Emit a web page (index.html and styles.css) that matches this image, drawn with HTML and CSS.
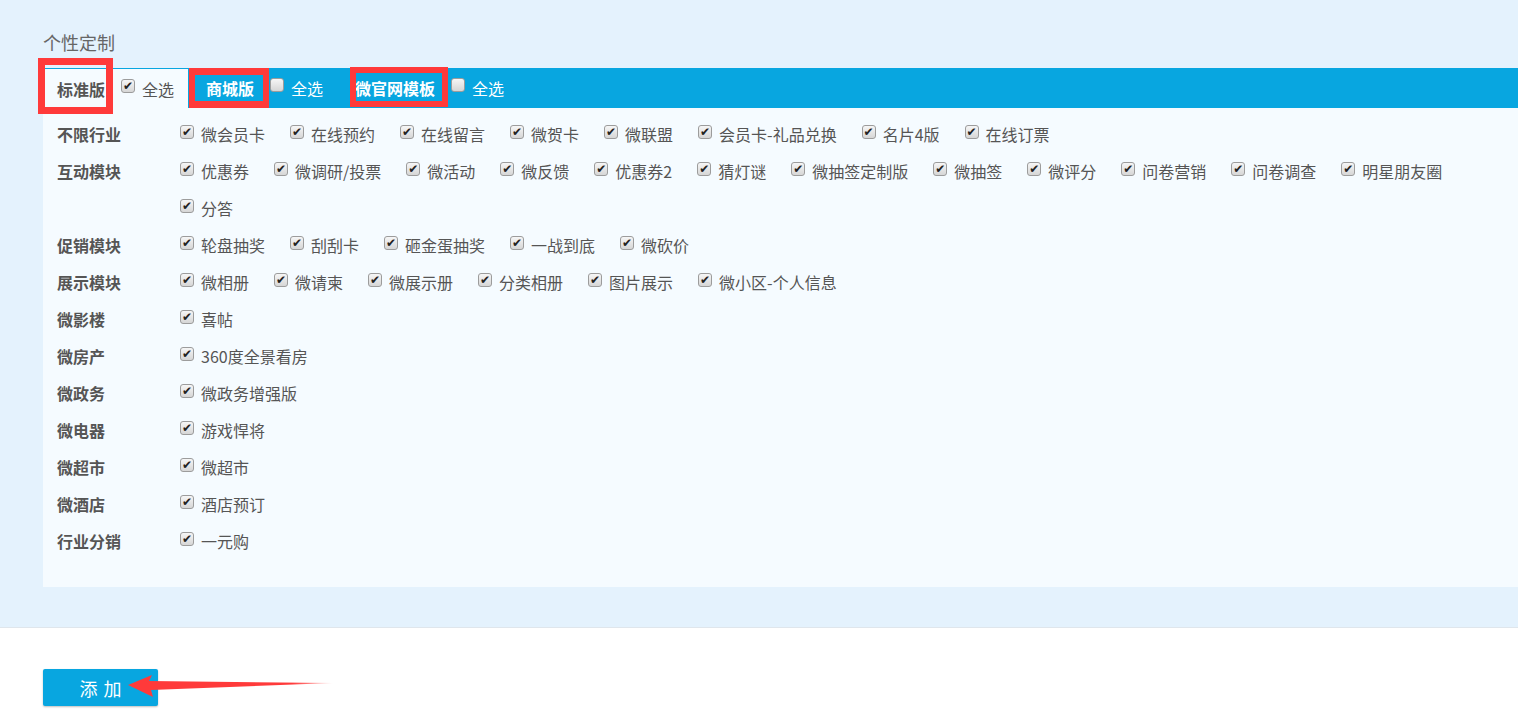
FILE: index.html
```html
<!DOCTYPE html>
<html lang="zh-CN">
<head>
    <meta charset="UTF-8">
    <meta name="viewport" content="width=device-width, initial-scale=1.0">
    <title>个性定制</title>
    <link rel="stylesheet" href="styles.css">
</head>
<body>
    <div class="main">
        <h3 class="title">个性定制</h3>

        <div class="tabs">
            <div class="tab active">
                <span class="tab-name mark mark-a">标准版</span>
                <label class="check-all"><input type="checkbox" checked> 全选</label>
            </div>
            <div class="tab">
                <span class="tab-name mark mark-b">商城版</span>
                <label class="check-all"><input type="checkbox"> 全选</label>
            </div>
            <div class="tab">
                <span class="tab-name mark mark-c">微官网模板</span>
                <label class="check-all"><input type="checkbox"> 全选</label>
            </div>
        </div>

        <div class="panel">
            <div class="row">
                <div class="row-label">不限行业</div>
                <div class="items">
                    <label class="item"><input type="checkbox" checked>微会员卡</label>
                    <label class="item"><input type="checkbox" checked>在线预约</label>
                    <label class="item"><input type="checkbox" checked>在线留言</label>
                    <label class="item"><input type="checkbox" checked>微贺卡</label>
                    <label class="item"><input type="checkbox" checked>微联盟</label>
                    <label class="item"><input type="checkbox" checked>会员卡-礼品兑换</label>
                    <label class="item"><input type="checkbox" checked>名片4版</label>
                    <label class="item"><input type="checkbox" checked>在线订票</label>
                </div>
            </div>
            <div class="row">
                <div class="row-label">互动模块</div>
                <div class="items">
                    <label class="item"><input type="checkbox" checked>优惠券</label>
                    <label class="item"><input type="checkbox" checked>微调研/投票</label>
                    <label class="item"><input type="checkbox" checked>微活动</label>
                    <label class="item"><input type="checkbox" checked>微反馈</label>
                    <label class="item"><input type="checkbox" checked>优惠券2</label>
                    <label class="item"><input type="checkbox" checked>猜灯谜</label>
                    <label class="item"><input type="checkbox" checked>微抽签定制版</label>
                    <label class="item"><input type="checkbox" checked>微抽签</label>
                    <label class="item"><input type="checkbox" checked>微评分</label>
                    <label class="item"><input type="checkbox" checked>问卷营销</label>
                    <label class="item"><input type="checkbox" checked>问卷调查</label>
                    <label class="item"><input type="checkbox" checked>明星朋友圈</label>
                    <label class="item"><input type="checkbox" checked>分答</label>
                </div>
            </div>
            <div class="row">
                <div class="row-label">促销模块</div>
                <div class="items">
                    <label class="item"><input type="checkbox" checked>轮盘抽奖</label>
                    <label class="item"><input type="checkbox" checked>刮刮卡</label>
                    <label class="item"><input type="checkbox" checked>砸金蛋抽奖</label>
                    <label class="item"><input type="checkbox" checked>一战到底</label>
                    <label class="item"><input type="checkbox" checked>微砍价</label>
                </div>
            </div>
            <div class="row">
                <div class="row-label">展示模块</div>
                <div class="items">
                    <label class="item"><input type="checkbox" checked>微相册</label>
                    <label class="item"><input type="checkbox" checked>微请柬</label>
                    <label class="item"><input type="checkbox" checked>微展示册</label>
                    <label class="item"><input type="checkbox" checked>分类相册</label>
                    <label class="item"><input type="checkbox" checked>图片展示</label>
                    <label class="item"><input type="checkbox" checked>微小区-个人信息</label>
                </div>
            </div>
            <div class="row">
                <div class="row-label">微影楼</div>
                <div class="items">
                    <label class="item"><input type="checkbox" checked>喜帖</label>
                </div>
            </div>
            <div class="row">
                <div class="row-label">微房产</div>
                <div class="items">
                    <label class="item"><input type="checkbox" checked>360度全景看房</label>
                </div>
            </div>
            <div class="row">
                <div class="row-label">微政务</div>
                <div class="items">
                    <label class="item"><input type="checkbox" checked>微政务增强版</label>
                </div>
            </div>
            <div class="row">
                <div class="row-label">微电器</div>
                <div class="items">
                    <label class="item"><input type="checkbox" checked>游戏悍将</label>
                </div>
            </div>
            <div class="row">
                <div class="row-label">微超市</div>
                <div class="items">
                    <label class="item"><input type="checkbox" checked>微超市</label>
                </div>
            </div>
            <div class="row">
                <div class="row-label">微酒店</div>
                <div class="items">
                    <label class="item"><input type="checkbox" checked>酒店预订</label>
                </div>
            </div>
            <div class="row">
                <div class="row-label">行业分销</div>
                <div class="items">
                    <label class="item"><input type="checkbox" checked>一元购</label>
                </div>
            </div>
        </div>
    </div>

    <div class="footer">
        <button class="btn-add">添加</button>
        <svg class="arrow" width="215" height="28" viewBox="0 0 215 28">
            <defs>
                <linearGradient id="fade" x1="0" x2="1" y1="0" y2="0">
                    <stop offset="0" stop-color="#ff3a3a"/>
                    <stop offset="0.8" stop-color="#ff3a3a"/>
                    <stop offset="1" stop-color="#ff3a3a" stop-opacity="0.2"/>
                </linearGradient>
            </defs>
            <polygon points="3,13 27,3 24,9 208,11 26,18 28,25" fill="url(#fade)"/>
        </svg>
    </div>
</body>
</html>
```

FILE: styles.css
```css
:root {
    --blue: #08a6e0;
    --bg-light: #e4f2fd;
    --panel: #f5fbff;
    --text: #555;
    --mark: #ff3a3a;
}

body {
    margin: 0;
    font-family: "Noto Sans CJK SC", "Liberation Sans", sans-serif;
    color: var(--text);
    background: #fff;
}

.main {
    background: var(--bg-light);
    padding: 30px 0 40px 43px;
    border-bottom: 1px solid #dfe6ec;
}

.title {
    margin: 0 0 14px;
    font-size: 18px;
    line-height: 24px;
    font-weight: normal;
    color: #666;
}

/* tab bar */
.tabs {
    display: flex;
    height: 40px;
    background: var(--blue);
}

.tab {
    display: flex;
    align-items: center;
    padding: 0 14px 0 18px;
    color: #fff;
    font-size: 16px;
}

.tab.active {
    padding-left: 14px;
    background: var(--panel);
    border-top: 1px solid var(--blue);
    color: var(--text);
}

.tab-name {
    font-weight: bold;
    line-height: 24px;
    margin-right: 16px;
}

.check-all {
    display: flex;
    align-items: center;
    gap: 7px;
    line-height: 24px;
}

/* red annotation boxes */
.mark {
    position: relative;
}

.mark::after {
    content: "";
    position: absolute;
    border: 7px solid var(--mark);
}

.mark-a::after { left: -19px; right: -8px; top: -19px; bottom: -13px; }
.mark-b::after { left: -17px; right: -15px; top: -8px; bottom: -8px; border-width: 7px 6px; }
.mark-c::after { left: -5px; right: -13px; top: -9px; bottom: -7px; border-width: 6px; }

/* checkboxes */
input[type="checkbox"] {
    appearance: none;
    -webkit-appearance: none;
    width: 14px;
    height: 14px;
    margin: 0 0 6px;
    border: 1px solid #9c9c9c;
    border-radius: 3px;
    background: linear-gradient(#f6f6f6, #d6d6d6);
    box-sizing: border-box;
    display: flex;
    align-items: center;
    justify-content: center;
    flex-shrink: 0;
}

input[type="checkbox"]:checked::before {
    content: "\2714";
    font-family: "DejaVu Sans", sans-serif;
    font-size: 12px;
    line-height: 1;
    color: #222;
}

/* module list */
.panel {
    background: var(--panel);
    padding: 8px 40px 27px 14px;
}

.row {
    display: flex;
    font-size: 16px;
    line-height: 37px;
}

.row-label {
    width: 123px;
    flex-shrink: 0;
    font-weight: bold;
}

.items {
    display: flex;
    flex-wrap: wrap;
    flex: 1;
}

.item {
    display: flex;
    align-items: center;
    gap: 7px;
    margin-right: 25px;
    height: 37px;
}

/* footer */
.footer {
    position: relative;
    padding: 41px 43px 30px;
}

.btn-add {
    width: 115px;
    height: 37px;
    padding: 0 0 0 6px;
    background: var(--blue);
    border: none;
    border-radius: 2px;
    box-shadow: 0 1px 2px rgba(0, 0, 0, 0.25);
    color: #fff;
    font-family: inherit;
    font-size: 18px;
    letter-spacing: 6px;
    cursor: pointer;
}

.arrow {
    position: absolute;
    left: 125px;
    top: 44px;
}
```
